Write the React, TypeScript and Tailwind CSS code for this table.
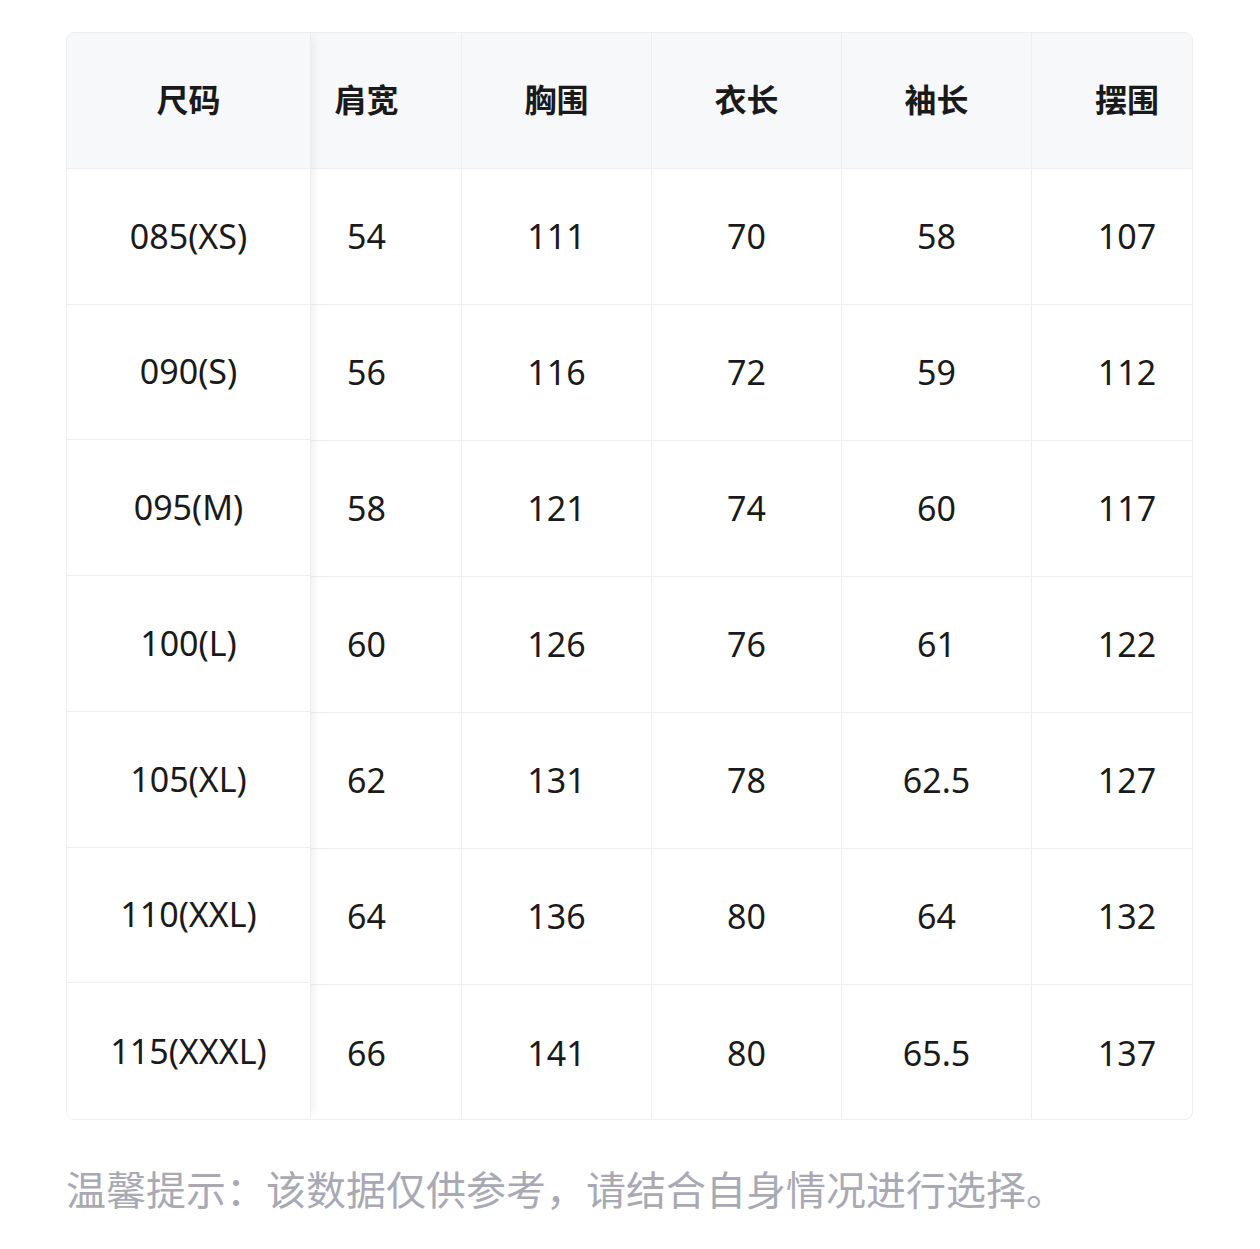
import React from "react";

const headers = ["肩宽", "胸围", "衣长", "袖长", "摆围"];
const rows: [string, string[]][] = [
  ["085(XS)", ["54", "111", "70", "58", "107"]],
  ["090(S)", ["56", "116", "72", "59", "112"]],
  ["095(M)", ["58", "121", "74", "60", "117"]],
  ["100(L)", ["60", "126", "76", "61", "122"]],
  ["105(XL)", ["62", "131", "78", "62.5", "127"]],
  ["110(XXL)", ["64", "136", "80", "64", "132"]],
  ["115(XXXL)", ["66", "141", "80", "65.5", "137"]],
];

const cjk = "font-['Noto_Sans_CJK_SC',sans-serif]";
const num = "font-['Noto_Sans','Noto_Sans_CJK_SC',sans-serif]";

function P({ c }: { c: string }) {
  return <span className="inline-block w-[1em]">{c}</span>;
}

export default function App() {
  return (
    <div className="bg-white w-[1260px] h-[1249px] pl-[66px] pt-[32px]">
      <div className="w-[1127px] h-[1088px] border border-[#eeeef1] rounded-[8px] overflow-hidden flex">
        {/* sticky first column */}
        <div className="w-[244px] shrink-0 flex flex-col relative z-10 bg-white border-r border-[#eeeef1] shadow-[8px_0_10px_-6px_rgba(0,0,0,0.07)]">
          <div className={`h-[136px] pb-[5px] flex items-center justify-center bg-[#f7f8fa] border-b border-[#eeeef1] text-[32px] font-bold text-[#1a1a1a] ${cjk}`}>
            尺码
          </div>
          {rows.map(([size], i) => (
            <div
              key={size}
              className={`h-[136px] flex items-center justify-center text-[34px] text-[#1a1a1a] ${num} ${i < rows.length - 1 ? "border-b border-[#eeeef1]" : ""}`}
            >
              {size}
            </div>
          ))}
        </div>
        {/* scrolled area */}
        <div className="flex-1 overflow-hidden">
          <div className="ml-[-39px] w-[950px] flex flex-col">
            <div className="h-[136px] flex bg-[#f7f8fa] border-b border-[#eeeef1]">
              {headers.map((h, j) => (
                <div
                  key={h}
                  className={`w-[190px] shrink-0 pb-[5px] flex items-center justify-center text-[32px] font-bold text-[#1a1a1a] ${cjk} ${j < headers.length - 1 ? "border-r border-[#eeeef1]" : ""}`}
                >
                  {h}
                </div>
              ))}
            </div>
            {rows.map(([size, vals], i) => (
              <div
                key={size}
                className={`h-[136px] flex ${i < rows.length - 1 ? "border-b border-[#eeeef1]" : ""}`}
              >
                {vals.map((v, j) => (
                  <div
                    key={j}
                    className={`w-[190px] shrink-0 flex items-center justify-center text-[34px] text-[#1a1a1a] ${num} ${j < vals.length - 1 ? "border-r border-[#eeeef1]" : ""}`}
                  >
                    {v}
                  </div>
                ))}
              </div>
            ))}
          </div>
        </div>
      </div>
      <div className={`mt-[42px] text-[40px] leading-[52px] whitespace-nowrap text-[#a9a9b4] ${cjk}`}>
        温馨提示<P c="：" />该数据仅供参考<P c="，" />请结合自身情况进行选择<P c="。" />
      </div>
    </div>
  );
}
